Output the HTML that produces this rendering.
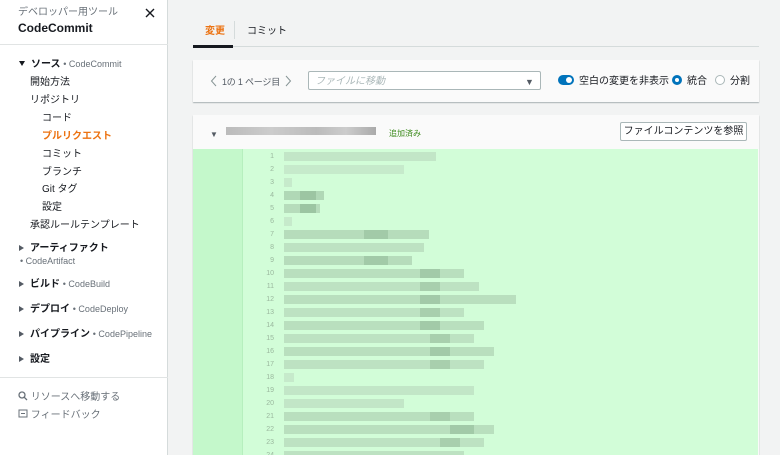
<!DOCTYPE html>
<html><head><meta charset="utf-8"><style>
*{margin:0;padding:0;box-sizing:border-box}
html,body{width:780px;height:455px;overflow:hidden}
body{background:#f2f3f3;font-family:"Liberation Sans","Noto Sans CJK JP",sans-serif;position:relative;color:#16191f;line-height:1.2}
.side{position:absolute;left:0;top:0;width:168px;height:455px;background:#fff;border-right:1px solid #d5dbdb}
.a{position:absolute;white-space:nowrap;line-height:12px;padding-top:2px}
.s{font-size:10px}
.g{color:#687078}
.tri{display:inline-block;width:0;height:0;border-left:3px solid transparent;border-right:3px solid transparent;border-top:5px solid #16191f;margin-right:6px;vertical-align:1px}
.trr{display:inline-block;width:0;height:0;border-top:3.5px solid transparent;border-bottom:3.5px solid transparent;border-left:5px solid #545b64;margin-right:6px;vertical-align:0}
b{font-weight:bold}
.blk{position:absolute;height:9px}
.ln{position:absolute;left:242px;width:32px;text-align:right;font-size:7px;line-height:9px;color:#9ab89e;font-family:"Liberation Sans",sans-serif}
</style></head><body>
<div class="side">
<div class="a" style="left:18px;top:5px;font-size:10px;color:#687078">デベロッパー用ツール</div>
<div class="a" style="left:18px;top:19px;font-size:12px;line-height:14px;font-weight:bold">CodeCommit</div>
<svg style="position:absolute;left:145px;top:8px" width="10" height="10"><path d="M1 1L9 9M9 1L1 9" stroke="#16191f" stroke-width="1.4"/></svg>
<div style="position:absolute;left:0;top:44px;width:168px;height:1px;background:#e1e4e4"></div>
<div class="a s" style="left:19px;top:56px"><span class="tri"></span><b>ソース</b> <span class="g" style="font-size:9px">• CodeCommit</span></div>
<div class="a s" style="left:30px;top:75px">開始方法</div>
<div class="a s" style="left:30px;top:93px">リポジトリ</div>
<div class="a s" style="left:42px;top:111px">コード</div>
<div class="a s" style="left:42px;top:129px;color:#ec7211;font-weight:bold">プルリクエスト</div>
<div class="a s" style="left:42px;top:147px">コミット</div>
<div class="a s" style="left:42px;top:165px">ブランチ</div>
<div class="a s" style="left:42px;top:182px">Git タグ</div>
<div class="a s" style="left:42px;top:200px">設定</div>
<div class="a s" style="left:30px;top:218px">承認ルールテンプレート</div>
<div class="a s" style="left:19px;top:241px"><span class="trr"></span><b>アーティファクト</b></div>
<div class="a g" style="left:20px;top:253px;font-size:9px">• CodeArtifact</div>
<div class="a s" style="left:19px;top:276px"><span class="trr"></span><b>ビルド</b> <span class="g" style="font-size:9px">• CodeBuild</span></div>
<div class="a s" style="left:19px;top:301px"><span class="trr"></span><b>デプロイ</b> <span class="g" style="font-size:9px">• CodeDeploy</span></div>
<div class="a s" style="left:19px;top:326px"><span class="trr"></span><b>パイプライン</b> <span class="g" style="font-size:9px">• CodePipeline</span></div>
<div class="a s" style="left:19px;top:352px"><span class="trr"></span><b>設定</b></div>
<div style="position:absolute;left:0;top:377px;width:168px;height:1px;background:#e1e4e4"></div>
<div class="a s g" style="left:18px;top:389px"><svg width="10" height="10" style="vertical-align:-1px"><circle cx="4" cy="4" r="3" fill="none" stroke="#687078" stroke-width="1.3"/><path d="M6.3 6.3L9 9" stroke="#687078" stroke-width="1.3"/></svg> リソースへ移動する</div>
<div class="a s g" style="left:18px;top:407px"><svg width="10" height="10" style="vertical-align:-1px"><rect x="1" y="1" width="8" height="7" fill="none" stroke="#687078"/><path d="M3 4.5H7" stroke="#687078"/></svg> フィードバック</div>
</div>

<div class="a" style="left:205px;top:24px;font-size:10px;color:#ec7211;font-weight:bold">変更</div>
<div style="position:absolute;left:234px;top:21px;width:1px;height:18px;background:#d5dbdb"></div>
<div class="a" style="left:247px;top:24px;font-size:10px">コミット</div>
<div style="position:absolute;left:193px;top:46px;width:566px;height:1px;background:#d5dbdb"></div>
<div style="position:absolute;left:193px;top:45px;width:40px;height:3px;background:#16191f"></div>

<div style="position:absolute;left:193px;top:60px;width:566px;height:42px;background:#fafafa;box-shadow:0 1px 1px rgba(0,28,36,.3)"></div>
<svg style="position:absolute;left:210px;top:75px" width="8" height="12"><path d="M6 1L1.5 6L6 11" fill="none" stroke="#879596" stroke-width="1"/></svg>
<div class="a" style="left:222px;top:74px;font-size:9px;color:#545b64;letter-spacing:-0.2px">1の 1 ページ目</div>
<svg style="position:absolute;left:284px;top:75px" width="8" height="12"><path d="M2 1L6.5 6L2 11" fill="none" stroke="#879596" stroke-width="1"/></svg>
<div style="position:absolute;left:308px;top:71px;width:233px;height:19px;background:#fff;border:1px solid #aab7b8;border-radius:2px"></div>
<div class="a" style="left:315px;top:74px;font-size:10px;color:#aab7b8;font-style:italic">ファイルに移動</div>
<div class="a" style="left:525px;top:74px;font-size:9px;color:#545b64">▼</div>
<div style="position:absolute;left:558px;top:75px;width:16px;height:10px;border-radius:5px;background:#0073bb"></div>
<div style="position:absolute;left:566px;top:77px;width:6px;height:6px;border-radius:3px;background:#fff"></div>
<div class="a" style="left:579px;top:74px;font-size:10px">空白の変更を非表示</div>
<div style="position:absolute;left:672px;top:75px;width:10px;height:10px;border-radius:5px;border:3px solid #0073bb;background:#fff"></div>
<div class="a" style="left:687px;top:74px;font-size:10px">統合</div>
<div style="position:absolute;left:715px;top:75px;width:10px;height:10px;border-radius:5px;border:1px solid #aab7b8;background:#fff"></div>
<div class="a" style="left:730px;top:74px;font-size:10px">分割</div>

<div style="position:absolute;left:193px;top:115px;width:566px;height:340px;background:#fafafa;box-shadow:0 1px 1px rgba(0,28,36,.3)"></div>
<div class="a" style="left:210px;top:127px;font-size:8px;color:#545b64">▼</div>
<div style="position:absolute;left:226px;top:127px;width:150px;height:8px;background:linear-gradient(90deg,#bbb,#ccc 30%,#bbb 60%,#ccc 80%,#aaa)"></div>
<div class="a" style="left:389px;top:126px;font-size:8px;color:#3d8b1d">追加済み</div>
<div style="position:absolute;left:620px;top:122px;width:127px;height:19px;background:#fff;border:1px solid #aab7b8;border-radius:2px;font-size:10px;text-align:center;line-height:18px;color:#16191f">ファイルコンテンツを参照</div>

<div style="position:absolute;left:193px;top:149px;width:565px;height:306px;background:#d2fdd8"></div>
<div style="position:absolute;left:193px;top:149px;width:49px;height:306px;background:#c4f8cb"></div>
<div style="position:absolute;left:242px;top:149px;width:1px;height:306px;background:#b6efbe"></div>

<div class="ln" style="top:152px">1</div><div class="ln" style="top:165px">2</div><div class="ln" style="top:178px">3</div><div class="ln" style="top:191px">4</div><div class="ln" style="top:204px">5</div><div class="ln" style="top:217px">6</div><div class="ln" style="top:230px">7</div><div class="ln" style="top:243px">8</div><div class="ln" style="top:256px">9</div><div class="ln" style="top:269px">10</div><div class="ln" style="top:282px">11</div><div class="ln" style="top:295px">12</div><div class="ln" style="top:308px">13</div><div class="ln" style="top:321px">14</div><div class="ln" style="top:334px">15</div><div class="ln" style="top:347px">16</div><div class="ln" style="top:360px">17</div><div class="ln" style="top:373px">18</div><div class="ln" style="top:386px">19</div><div class="ln" style="top:399px">20</div><div class="ln" style="top:412px">21</div><div class="ln" style="top:425px">22</div><div class="ln" style="top:438px">23</div><div class="ln" style="top:451px">24</div>

<div class="blk" style="left:284px;top:152px;width:152px;background:#c2e6c7"></div>
<div class="blk" style="left:284px;top:165px;width:120px;background:#c6eacb"></div>
<div class="blk" style="left:284px;top:178px;width:8px;background:#c6eacb"></div>
<div class="blk" style="left:284px;top:191px;width:40px;background:#b0d8b6"></div><div class="blk" style="left:300px;top:191px;width:16px;background:#9cc5a2"></div>
<div class="blk" style="left:284px;top:204px;width:36px;background:#b6dcbb"></div><div class="blk" style="left:300px;top:204px;width:16px;background:#9cc5a2"></div>
<div class="blk" style="left:284px;top:217px;width:8px;background:#c6eacb"></div>
<div class="blk" style="left:284px;top:230px;width:145px;background:#b6dcbb"></div><div class="blk" style="left:364px;top:230px;width:24px;background:#a2caa8"></div>
<div class="blk" style="left:284px;top:243px;width:140px;background:#bde2c2"></div>
<div class="blk" style="left:284px;top:256px;width:128px;background:#b6dcbb"></div><div class="blk" style="left:364px;top:256px;width:24px;background:#a2caa8"></div>
<div class="blk" style="left:284px;top:269px;width:180px;background:#b9dfbe"></div><div class="blk" style="left:420px;top:269px;width:20px;background:#a2caa8"></div>
<div class="blk" style="left:284px;top:282px;width:195px;background:#bde2c2"></div><div class="blk" style="left:420px;top:282px;width:20px;background:#a8cfad"></div>
<div class="blk" style="left:284px;top:295px;width:232px;background:#b9dfbe"></div><div class="blk" style="left:420px;top:295px;width:20px;background:#a2caa8"></div>
<div class="blk" style="left:284px;top:308px;width:180px;background:#bde2c2"></div><div class="blk" style="left:420px;top:308px;width:20px;background:#a8cfad"></div>
<div class="blk" style="left:284px;top:321px;width:200px;background:#b9dfbe"></div><div class="blk" style="left:420px;top:321px;width:20px;background:#a2caa8"></div>
<div class="blk" style="left:284px;top:334px;width:190px;background:#bde2c2"></div><div class="blk" style="left:430px;top:334px;width:20px;background:#a8cfad"></div>
<div class="blk" style="left:284px;top:347px;width:210px;background:#b9dfbe"></div><div class="blk" style="left:430px;top:347px;width:20px;background:#a2caa8"></div>
<div class="blk" style="left:284px;top:360px;width:200px;background:#bde2c2"></div><div class="blk" style="left:430px;top:360px;width:20px;background:#a8cfad"></div>
<div class="blk" style="left:284px;top:373px;width:10px;background:#c6eacb"></div>
<div class="blk" style="left:284px;top:386px;width:190px;background:#c2e6c7"></div>
<div class="blk" style="left:284px;top:399px;width:120px;background:#c2e6c7"></div>
<div class="blk" style="left:284px;top:412px;width:190px;background:#b9dfbe"></div><div class="blk" style="left:430px;top:412px;width:20px;background:#a8cfad"></div>
<div class="blk" style="left:284px;top:425px;width:210px;background:#b9dfbe"></div><div class="blk" style="left:450px;top:425px;width:24px;background:#a2caa8"></div>
<div class="blk" style="left:284px;top:438px;width:200px;background:#bde2c2"></div><div class="blk" style="left:440px;top:438px;width:20px;background:#a8cfad"></div>
<div class="blk" style="left:284px;top:451px;width:180px;background:#bde2c2"></div>
</body></html>
